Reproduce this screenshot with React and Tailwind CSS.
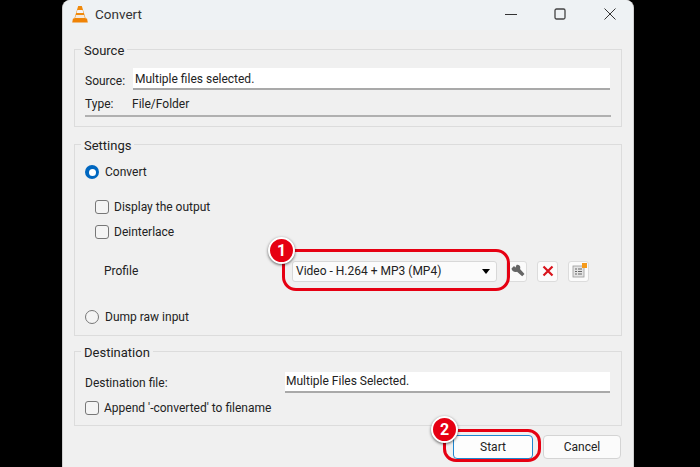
import React from "react";

function Check({ label, className = "" }) {
  return (
    <div className={`flex items-center gap-[5px] h-[18px] ${className}`}>
      <span className="w-[14px] h-[14px] rounded-[3px] border border-[#777] bg-[#f4f4f4]" />
      <span>{label}</span>
    </div>
  );
}

function Badge({ n, className }) {
  return (
    <span className={`absolute w-[27px] h-[27px] rounded-full bg-[#e60012] border-2 border-white shadow-[0_1px_3px_rgba(0,0,0,0.6)] text-white font-bold text-[16px] flex items-center justify-center ${className}`}>
      {n}
    </span>
  );
}

function IconBtn({ children, className = "" }) {
  return (
    <div className={`w-[21px] h-[21px] rounded-[3px] bg-[#fbfbfb] border border-[#dcdcdc] flex items-center justify-center ${className}`}>
      {children}
    </div>
  );
}

export default function App() {
  return (
    <div className="w-[700px] h-[467px] bg-black overflow-hidden pl-[62px] font-['Roboto',sans-serif] text-[12px] text-[#222]">
      <div className="relative w-[572px] h-[467px] bg-[#f0f0f0] rounded-t-[8px] border-x border-[#d0d0d0] flex flex-col">
        <div className="h-[30px] shrink-0 rounded-t-[8px] bg-[#eef2f4] flex items-center pl-[9px] pb-[3px]">
          <svg width="16" height="18" viewBox="0 0 16 18" className="mr-[7px]">
            <path d="M6.200 1h3.600l4 13H2.200z" fill="#f08a0c" />
            <path d="M5.400 5h5.200l.9 3H4.500z" fill="#f4f4f4" />
            <path d="M3.900 10h8.200l.8 3H3.100z" fill="#f4f4f4" opacity=".9" />
            <path d="M1 13.500h14l.8 4H.2z" fill="#ef8407" />
          </svg>
          <span className="text-[13.5px] text-[#333] pt-[1px]">Convert</span>
          <div className="ml-auto flex items-center pr-[17px]">
            <svg width="12" height="12" viewBox="0 0 12 12"><path d="M0 6.500h12" stroke="#333" strokeWidth="1" /></svg>
            <svg width="12" height="12" viewBox="0 0 12 12" className="ml-[37px]"><rect x="1" y="1" width="10" height="10" rx="1.500" fill="none" stroke="#444" strokeWidth="1.300" /></svg>
            <svg width="12" height="12" viewBox="0 0 12 12" className="ml-[38px]"><path d="M.5.5l11 11M11.500.5l-11 11" stroke="#333" strokeWidth="1" /></svg>
          </div>
        </div>

        <div className="flex-1 px-[11px] pt-[9px] flex flex-col">
          <fieldset className="border border-[#dcdcdc] h-[88px] px-[10px]">
            <legend className="ml-[-4px] px-[3px] pt-[4px] text-[13px] leading-[16px]">Source</legend>
            <div className="flex items-center h-[22px] mt-[9px]">
              <span className="w-[48px] pt-[3px]">Source:</span>
              <div className="flex-1 mr-[1px] h-[22px] bg-white border-b-2 border-[#a9a9a9] pl-[2px] leading-[23px]">Multiple files selected.</div>
            </div>
            <div className="flex items-center h-[22px] mt-[3px]">
              <span className="w-[47px]">Type:</span>
              <span>File/Folder</span>
            </div>
            <div className="h-[2px] bg-[#b0b0b0]" />
          </fieldset>

          <fieldset className="border border-[#dcdcdc] h-[202px] mt-[7px] px-[10px]">
            <legend className="ml-[-4px] px-[3px] pt-[4px] text-[13px] leading-[16px]">Settings</legend>
            <div className="flex items-center gap-[6px] h-[18px] mt-[9px]">
              <span className="w-[14px] h-[14px] rounded-full bg-[#0067c0] flex items-center justify-center">
                <span className="w-[7px] h-[7px] rounded-full bg-white" />
              </span>
              <span>Convert</span>
            </div>
            <Check label="Display the output" className="ml-[10px] mt-[17px]" />
            <Check label="Deinterlace" className="ml-[10px] mt-[7px]" />
            <div className="flex items-center h-[22px] mt-[19px]">
              <span className="w-[207px] pl-[19px]">Profile</span>
              <div className="w-[205px] h-[21px] bg-[#fbfbfb] border border-[#d8d8d8] rounded-[3px] flex items-center justify-between pl-[3px] pr-[6px]">
                <span>Video - H.264 + MP3 (MP4)</span>
                <span className="w-0 h-0 border-x-[4px] border-x-transparent border-t-[5px] border-t-black" />
              </div>
              <IconBtn className="ml-[9px]">
                <svg width="14" height="14" viewBox="0 0 14 14" className="mr-[-2px]"><path d="M.5 4.500 3 2l1.500 1.500L5.500 1c1.800-.6 3.800.6 3.800 2.500 0 .5-.1 1-.3 1.400l4.500 5.100-2.300 2.300L6 7.700c-2.500.8-5.500-.8-5.500-3.200z" fill="#666" /></svg>
              </IconBtn>
              <IconBtn className="ml-[10px]">
                <svg width="12" height="12" viewBox="0 0 12 12"><path d="M1.500 1.500l9 9M10.500 1.500l-9 9" stroke="#d8141c" strokeWidth="2.200" /></svg>
              </IconBtn>
              <IconBtn className="ml-[10px] relative">
                <svg width="14" height="14" viewBox="0 0 14 14">
                  <rect x="1" y="2" width="11" height="11" fill="#e4e4e4" stroke="#999" strokeWidth=".8" />
                  <path d="M3 5h2M6 5h4M3 7.500h2M6 7.500h4M3 10h2M6 10h4" stroke="#666" strokeWidth="1" />
                </svg>
                <span className="absolute top-[1px] right-[1px] w-[5px] h-[5px] bg-[#f59a1b]" />
              </IconBtn>
            </div>
            <div className="flex items-center gap-[6px] h-[18px] mt-[26px]">
              <span className="w-[14px] h-[14px] rounded-full border border-[#777] bg-[#f4f4f4]" />
              <span>Dump raw input</span>
            </div>
          </fieldset>

          <fieldset className="border border-[#dcdcdc] h-[85px] mt-[5px] px-[10px]">
            <legend className="ml-[-4px] px-[3px] pt-[4px] text-[13px] leading-[16px]">Destination</legend>
            <div className="flex items-center h-[21px] mt-[11px]">
              <span className="w-[200px]">Destination file:</span>
              <div className="flex-1 mr-[1px] h-[21px] bg-white border-b-2 border-[#a9a9a9] pl-[1px] leading-[19px]">Multiple Files Selected.</div>
            </div>
            <Check label="Append '-converted' to filename" className="mt-[6px]" />
          </fieldset>

          <div className="flex justify-end gap-[10px] mt-[9px] mr-[1px]">
            <div className="w-[80px] h-[24px] rounded-[4px] bg-[#fdfdfd] border-[1.5px] border-[#1f86d0] flex items-center justify-center">Start</div>
            <div className="w-[78px] h-[24px] rounded-[4px] bg-[#fbfbfb] border border-[#d4d4d4] flex items-center justify-center">Cancel</div>
          </div>
        </div>

        <div className="absolute left-[219px] top-[249px] w-[228px] h-[42px] rounded-[14px] border-[3px] border-[#e60012]" />
        <Badge n="1" className="left-[205px] top-[237px]" />
        <div className="absolute left-[380px] top-[429px] w-[98px] h-[33px] rounded-[13px] border-[3px] border-[#e60012]" />
        <Badge n="2" className="left-[368px] top-[416px]" />
      </div>
    </div>
  );
}
